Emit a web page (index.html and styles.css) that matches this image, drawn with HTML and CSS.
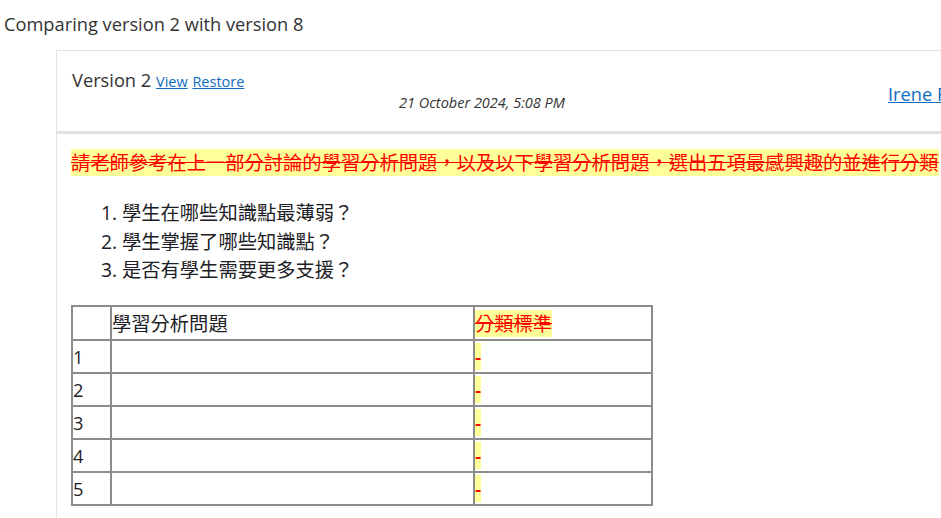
FILE: index.html
```html
<!DOCTYPE html>
<html lang="zh-Hant">
<head>
<meta charset="utf-8">
<title>Comparing version 2 with version 8</title>
<link rel="stylesheet" href="styles.css">
</head>
<body>
<div class="page">
  <div class="title">Comparing version 2 with version 8</div>
  <div class="diff">
    <div class="diff-head">
      <div class="ver">Version 2 <a href="#" class="small-link">View</a> <a href="#" class="small-link">Restore</a></div>
      <div class="date">21 October 2024, 5:08 PM</div>
      <div class="author"><a href="#">Irene Fung</a></div>
    </div>
    <div class="diff-body">
      <p class="para"><span class="del">請老師參考在上一部分討論的學習分析問題，以及以下學習分析問題，選出五項最感興趣的並進行分類</span></p>
      <ol class="questions">
        <li>學生在哪些知識點最薄弱？</li>
        <li>學生掌握了哪些知識點？</li>
        <li>是否有學生需要更多支援？</li>
      </ol>
      <table class="grid">
        <tr class="head-row">
          <td class="c1"></td>
          <td class="c2">學習分析問題</td>
          <td class="c3"><span class="del">分類標準</span></td>
        </tr>
        <tr><td class="num">1</td><td></td><td><span class="del dash">-</span></td></tr>
        <tr><td class="num">2</td><td></td><td><span class="del dash">-</span></td></tr>
        <tr><td class="num">3</td><td></td><td><span class="del dash">-</span></td></tr>
        <tr><td class="num">4</td><td></td><td><span class="del dash">-</span></td></tr>
        <tr><td class="num">5</td><td></td><td><span class="del dash">-</span></td></tr>
      </table>
    </div>
  </div>
</div>
</body>
</html>
```
FILE: styles.css
```css
html, body {
  margin: 0;
  padding: 0;
  background: #ffffff;
  overflow: hidden;
}
body {
  font-family: "Open Sans", "Noto Sans CJK TC", sans-serif;
  font-size: 19.3px;
  line-height: 1.5;
  color: #1d2125;
}
.page {
  width: 1200px;
}
.title {
  font-size: 18.25px;
  line-height: 28px;
  padding: 10px 0 0 4px;
  height: 40px;
  color: #333333;
}
.diff {
  margin-left: 56px;
  width: 1100px;
}
.diff-head {
  display: grid;
  grid-template-columns: 260px 300px 1fr;
  align-items: start;
  border-top: 1px solid #e2e2e2;
  border-left: 1px solid #e2e2e2;
  border-bottom: 3px solid #e2e2e2;
  padding: 15px 0 0 15px;
  height: 65px;
  color: #333333;
}
.ver {
  font-size: 18.25px;
  line-height: 28px;
  white-space: nowrap;
}
.small-link {
  font-size: 14.5px;
}
a {
  color: #0f6cbf;
  text-decoration: underline;
}
.date {
  margin-top: 26px;
  font-style: italic;
  font-size: 14.5px;
  line-height: 22px;
  text-align: center;
  white-space: nowrap;
}
.author {
  margin-top: 14px;
  padding-left: 256px;
  font-size: 18.25px;
  line-height: 28px;
  white-space: nowrap;
}
.diff-body {
  border-left: 1px solid #e2e2e2;
  padding: 15px 0 20px 14px;
  min-height: 400px;
}
.para {
  margin: 0;
  line-height: 28px;
  white-space: nowrap;
}
.del {
  color: #ff0000;
  text-decoration: line-through;
  background: #ffff99;
}
.del.dash {
  text-decoration: none;
  font-weight: 600;
}
.questions {
  margin: 22px 0 0 0;
  padding-left: 51px;
  line-height: 28.5px;
}
.grid {
  margin-top: 20px;
  border: 1px solid #8c8c8c;
  border-spacing: 0;
  border-collapse: separate;
  table-layout: fixed;
}
.grid td {
  border: 1px solid #8c8c8c;
  padding: 1px 0 1px 0;
  line-height: 29px;
  vertical-align: middle;
}
.grid .head-row td {
  padding: 2px 0 1px 0;
}
.grid .c1 { width: 37px; }
.grid .c2 { width: 361px; }
.grid .c3 { width: 176px; }
.num {
  font-size: 18.25px;
}
```
